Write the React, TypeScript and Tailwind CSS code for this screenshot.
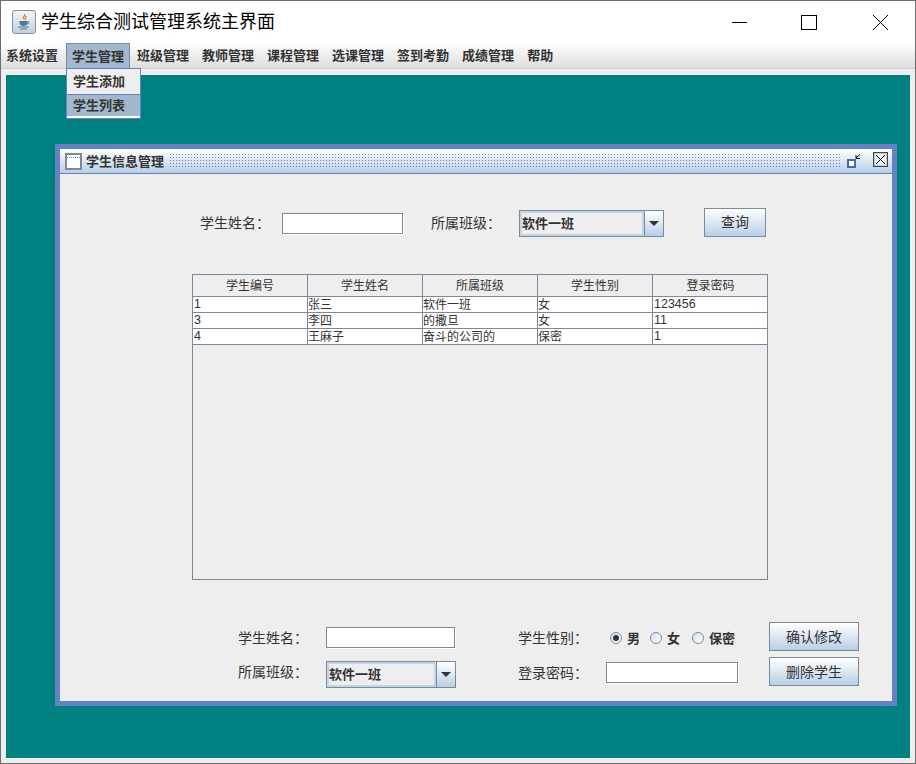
const FONT = "font-['Liberation_Sans','Noto_Sans_CJK_SC',sans-serif]";

const menus = ["系统设置", "学生管理", "班级管理", "教师管理", "课程管理", "选课管理", "签到考勤", "成绩管理", "帮助"];
const columns = ["学生编号", "学生姓名", "所属班级", "学生性别", "登录密码"];
const rows = [
  ["1", "张三", "软件一班", "女", "123456"],
  ["3", "李四", "的撒旦", "女", "11"],
  ["4", "王麻子", "奋斗的公司的", "保密", "1"],
];

const JavaIcon = () => (
  <div className="flex h-[24px] w-[24px] items-center justify-center rounded-[3px] border border-[#7f93ad] bg-gradient-to-b from-[#f4f6f8] to-[#c3cfdc]">
    <svg width="18" height="18" viewBox="0 0 18 18" fill="none">
      <path d="M9.5 1c1.5 2-2.5 3-1 5M11 3c1 1.500-2 2.500-.8 3.800" stroke="#e2761c" strokeWidth="1.200" />
      <path d="M4.500 8h8v1.500c0 2-1.500 3.500-4 3.500s-4-1.500-4-3.500z" fill="#4d7a97" />
      <path d="M12.500 8.500c2-.5 2.500 2-.5 2.500" stroke="#4d7a97" />
      <path d="M3 14h11M5 16h7" stroke="#4d7a97" strokeWidth="1.200" />
    </svg>
  </div>
);

const ComboBox = ({ width }: { width: string }) => (
  <div className={`flex h-[27px] shrink-0 border border-[#7a8a99] ${width}`}>
    <div className="flex flex-1 items-center border-2 border-[#c5d5e5] bg-[#eeeeee] text-[13px] font-bold leading-none text-[#333333]">
      软件一班
    </div>
    <div className="flex w-[19px] items-center justify-center border-l border-[#7a8a99] bg-gradient-to-b from-white to-[#b8cfe5]">
      <div className="h-0 w-0 border-x-[5px] border-t-[5px] border-x-transparent border-t-[#333333]" />
    </div>
  </div>
);

const TextField = ({ width }: { width: string }) => (
  <div className={`h-[21px] shrink-0 border border-[#7a8a99] bg-white shadow-[1px_1px_0_#ffffff] ${width}`} />
);

const JButton = ({ label, width, height }: { label: string; width: string; height: string }) => (
  <button className={`shrink-0 border border-[#7a8a99] bg-gradient-to-b from-white to-[#b8cfe5] text-[14px] leading-none text-[#333333] ${width} ${height}`}>
    {label}
  </button>
);

const Radio = ({ label, checked }: { label: string; checked?: boolean }) => (
  <div className="flex items-center gap-[5px]">
    <div className="flex h-[12px] w-[12px] items-center justify-center rounded-full border border-[#7a8a99] bg-gradient-to-br from-[#cfdfee] to-white">
      {checked && <div className="h-[6px] w-[6px] rounded-full bg-[#333333]" />}
    </div>
    <span className="text-[13px] font-bold leading-none text-[#333333]">{label}</span>
  </div>
);

const Label = ({ text, width }: { text: string; width: string }) => (
  <span className={`shrink-0 text-[14px] leading-none text-[#333333] ${width}`}>{text}</span>
);

export default function App() {
  return (
    <div className={`flex h-[764px] w-[916px] flex-col overflow-hidden border border-[#6e6e6e] bg-[#eeeeee] ${FONT}`}>
      {/* window title */}
      <div className="flex h-[42px] shrink-0 items-center bg-white pl-[11px]">
        <JavaIcon />
        <span className="ml-[5px] text-[18px] leading-none text-black">学生综合测试管理系统主界面</span>
        <div className="ml-auto -mt-[14px] flex items-center">
          <svg width="216" height="30" viewBox="0 0 216 30" fill="none" stroke="black">
            <path d="M33 22.500h15" />
            <rect x="102.500" y="15.500" width="15" height="14" />
            <path d="M174 15l15 15M189 15l-15 15" />
          </svg>
        </div>
      </div>

      {/* menu bar */}
      <div className="relative flex h-[26px] shrink-0 items-stretch border-b border-[#cfcfcf] bg-gradient-to-b from-white to-[#dddddd]">
        {menus.map((m, i) => (
          <div
            key={m}
            className={`flex items-center text-[13px] font-bold leading-none text-[#333333] ${i === 0 ? "pl-[4px] pr-[6px]" : "px-[5px]"} ${i === 1 ? "border border-[#7a8a99] border-b-0 bg-[#a3b8cc]" : "border border-transparent"} ${i === 8 ? "" : "mr-[1px]"}`}
          >
            {m}
          </div>
        ))}
        <div className="absolute left-[65px] top-[25px] z-20 flex h-[51px] w-[75px] flex-col border border-[#6582c0] bg-white text-[13px] font-bold leading-none text-[#333333]">
          <div className="flex h-[25px] items-center bg-[#eeeeee] pl-[6px]">学生添加</div>
          <div className="flex h-[22px] items-center border-t border-[#6582c0] bg-[#a3b8cc] pl-[6px]">学生列表</div>
        </div>
      </div>

      {/* desktop */}
      <div className="flex-1 px-[5px] pb-[5px] pt-[6px]">
        <div className="relative h-full w-full bg-[#008080]">
          <div className="absolute left-[49px] top-[69px] flex h-[562px] w-[842px] flex-col border-[5px] border-[#6582c0] bg-[#eeeeee]">
            {/* internal frame title */}
            <div className="flex h-[25px] shrink-0 items-center border-b border-[#6582c0] bg-gradient-to-b from-white to-[#b8cfe5] pl-[5px] pr-[3px]">
              <svg width="17" height="17" viewBox="0 0 17 17" fill="none">
                <rect x="1" y="1" width="15" height="15" fill="white" stroke="#7a8a99" strokeWidth="2" />
                <path d="M2 4.500h13" stroke="#7a8a99" strokeDasharray="1 1" />
              </svg>
              <span className="ml-[4px] text-[13px] font-bold leading-none text-[#333333]">学生信息管理</span>
              <div className="ml-[5px] h-[16px] flex-1 bg-[radial-gradient(#6582c0_0.6px,transparent_0.7px)] bg-[length:3px_3px]" />
              <svg className="ml-[5px]" width="14" height="16" viewBox="0 0 14 16" fill="none">
                <rect x="1" y="7" width="7" height="7" fill="white" stroke="#4a68b0" strokeWidth="2" />
                <path d="M13 1.500l-4 3.500M9 2v3.500h4" stroke="black" />
              </svg>
              <svg className="-mt-[3px] ml-[12px] mr-[1px]" width="15" height="15" viewBox="0 0 15 15" fill="none">
                <rect x="0.500" y="0.500" width="14" height="14" fill="#eef3f8" stroke="#3c4a60" strokeWidth="1.500" />
                <path d="M3 3l9 9M12 3l-9 9" stroke="black" />
              </svg>
            </div>

            {/* content */}
            <div className="flex flex-1 flex-col">
              <div className="mt-[34px] flex h-[30px] items-center pl-[140px]">
                <Label text="学生姓名：" width="w-[82px]" />
                <TextField width="w-[121px]" />
                <span className="w-[28px] shrink-0" />
                <Label text="所属班级：" width="w-[88px]" />
                <ComboBox width="w-[145px]" />
                <span className="w-[40px] shrink-0" />
                <div className="mb-[2px]">
                  <JButton label="查询" width="w-[62px]" height="h-[29px]" />
                </div>
              </div>

              {/* table */}
              <div className="ml-[132px] mt-[36px] h-[306px] w-[576px] shrink-0 border border-[#7a8a99]">
                <div className="grid h-[22px] grid-cols-[115px_115px_115px_115px_115px] border-b border-[#7a8a99] bg-[#eeeeee]">
                  {columns.map((c) => (
                    <div key={c} className="flex items-center justify-center border-r border-[#7a8a99] text-[12px] leading-none text-[#333333] last:border-r-0">
                      {c}
                    </div>
                  ))}
                </div>
                <div className="bg-[#eeeeee]">
                  {rows.map((r) => (
                    <div key={r[0]} className="grid h-[16px] grid-cols-[115px_115px_115px_115px_115px] border-b border-[#7a8a99] bg-white">
                      {r.map((cell, i) => (
                        <div
                          key={i}
                          className={`flex items-center border-r border-[#7a8a99] leading-none text-[#333333] ${/^\d+$/.test(cell) ? "pl-[1px] text-[12.5px]" : "text-[12px]"}`}
                        >
                          {cell}
                        </div>
                      ))}
                    </div>
                  ))}
                </div>
              </div>

              {/* edit form */}
              <div className="ml-[178px] mt-[42px] flex">
                <div className="flex flex-col gap-[12px] pt-[5px]">
                  <div className="flex items-center">
                    <Label text="学生姓名：" width="w-[88px]" />
                    <TextField width="w-[129px]" />
                  </div>
                  <div className="flex items-center">
                    <div className="pb-[4px]">
                      <Label text="所属班级：" width="inline-block w-[88px]" />
                    </div>
                    <ComboBox width="w-[130px]" />
                  </div>
                </div>
                <div className="ml-[62px] flex flex-col gap-[15px] pt-[7px]">
                  <div className="flex h-[18px] items-center">
                    <Label text="学生性别：" width="w-[92px]" />
                    <div className="flex gap-[10px]">
                      <Radio label="男" checked />
                      <Radio label="女" />
                      <div className="ml-[2px]">
                        <Radio label="保密" />
                      </div>
                    </div>
                  </div>
                  <div className="flex items-center">
                    <Label text="登录密码：" width="w-[88px]" />
                    <TextField width="w-[132px]" />
                  </div>
                </div>
                <div className="ml-[31px] flex flex-col gap-[6px]">
                  <JButton label="确认修改" width="w-[90px]" height="h-[29px]" />
                  <JButton label="删除学生" width="w-[90px]" height="h-[29px]" />
                </div>
              </div>
            </div>
          </div>
        </div>
      </div>
    </div>
  );
}
